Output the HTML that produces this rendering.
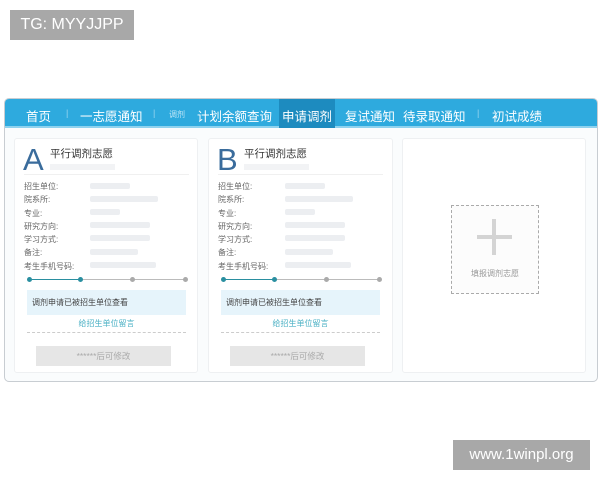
<!DOCTYPE html>
<html><head><meta charset="utf-8"><style>
*{margin:0;padding:0;box-sizing:border-box}
body{width:600px;height:480px;background:#fff;position:relative;overflow:hidden;font-family:"Liberation Sans","Noto Sans CJK SC",sans-serif}
.abs{position:absolute}
.tag{background:#a8a8a8;color:#fff;font-size:16px;line-height:30px;text-align:center}
.outer{left:4px;top:98px;width:594px;height:284px;border:1px solid #c8cdd2;border-radius:5px;background:#fafcfd;overflow:hidden}
.nav{left:0;top:0;width:594px;height:29px;background:#2eaade;border-bottom:2px solid #8fd2ee}
.nav span{position:absolute;top:7px;color:#fff;font-size:12.5px;white-space:nowrap}
.nav .sep{color:#9bd6ef;font-size:9px;top:9px}
.act{position:absolute;left:274px;top:0;width:56px;height:29px;background:#1d8bbf}
.card{background:#fff;border:1px solid #eef0f2;border-radius:3px}
.big{font-size:31px;color:#3a6c9c;font-family:"Liberation Sans",sans-serif;line-height:30px;font-weight:300}
.t{font-size:10.5px;color:#333}
.lab{font-size:8px;color:#666;line-height:13.3px}
.bar{background:#eceef1;height:6px;border-radius:2px}
.dot{width:5px;height:5px;border-radius:50%}
</style></head><body>
<div class="abs tag" style="left:10px;top:10px;width:124px;height:30px">TG: MYYJJPP</div>
<div class="abs tag" style="left:453px;top:440px;width:137px;height:30px;font-size:15px">www.1winpl.org</div>

<div class="abs outer">
 <div class="abs nav">
  <div class="act"></div>
  <span style="left:21px">首页</span>
  <span class="sep" style="left:61px">|</span>
  <span style="left:75px">一志愿通知</span>
  <span class="sep" style="left:148px">|</span>
  <span style="left:164px;font-size:8px;top:10px;color:#bfe6f7">调剂</span>
  <span style="left:192px">计划余额查询</span>
  <span style="left:277px">申请调剂</span>
  <span style="left:340px">复试通知</span>
  <span style="left:398px">待录取通知</span>
  <span class="sep" style="left:472px">|</span>
  <span style="left:487px">初试成绩</span>
 </div>
</div>

<div class="abs card" style="left:14px;top:138px;width:184px;height:235px"></div>
<div class="abs card" style="left:208px;top:138px;width:185px;height:235px"></div>
<div class="abs card" style="left:402px;top:138px;width:184px;height:235px"></div>

<div class="abs big" style="left:23px;top:145px">A</div>
<div class="abs big" style="left:217px;top:145px">B</div>
<div class="abs t" style="left:50px;top:146px">平行调剂志愿</div>
<div class="abs t" style="left:244px;top:146px">平行调剂志愿</div>

<div class="abs" style="left:50px;top:164px;width:65px;height:6px;background:#f2f3f5"></div>
<div class="abs" style="left:24px;top:174px;width:165px;height:1px;background:#f0f0f0"></div>
<div class="abs" style="left:244px;top:164px;width:65px;height:6px;background:#f2f3f5"></div>
<div class="abs" style="left:218px;top:174px;width:165px;height:1px;background:#f0f0f0"></div>

<div class="abs lab" style="left:24px;top:180px">招生单位:<br>院系所:<br>专业:<br>研究方向:<br>学习方式:<br>备注:<br>考生手机号码:</div>
<div class="abs lab" style="left:218px;top:180px">招生单位:<br>院系所:<br>专业:<br>研究方向:<br>学习方式:<br>备注:<br>考生手机号码:</div>

<div class="abs bar" style="left:90px;top:183px;width:40px"></div>
<div class="abs bar" style="left:90px;top:196px;width:68px"></div>
<div class="abs bar" style="left:90px;top:209px;width:30px"></div>
<div class="abs bar" style="left:90px;top:222px;width:60px"></div>
<div class="abs bar" style="left:90px;top:235px;width:60px"></div>
<div class="abs bar" style="left:90px;top:249px;width:48px"></div>
<div class="abs bar" style="left:90px;top:262px;width:66px"></div>
<div class="abs bar" style="left:285px;top:183px;width:40px"></div>
<div class="abs bar" style="left:285px;top:196px;width:68px"></div>
<div class="abs bar" style="left:285px;top:209px;width:30px"></div>
<div class="abs bar" style="left:285px;top:222px;width:60px"></div>
<div class="abs bar" style="left:285px;top:235px;width:60px"></div>
<div class="abs bar" style="left:285px;top:249px;width:48px"></div>
<div class="abs bar" style="left:285px;top:262px;width:66px"></div>

<div class="abs" style="left:29px;top:279px;width:156px;height:1px;background:#bbb"></div>
<div class="abs" style="left:29px;top:279px;width:52px;height:1px;background:#2a8fa0"></div>
<div class="abs dot" style="left:27px;top:277px;background:#2a8fa0"></div>
<div class="abs dot" style="left:78px;top:277px;background:#2a8fa0"></div>
<div class="abs dot" style="left:130px;top:277px;background:#aaa"></div>
<div class="abs dot" style="left:183px;top:277px;background:#aaa"></div>
<div class="abs" style="left:223px;top:279px;width:156px;height:1px;background:#bbb"></div>
<div class="abs" style="left:223px;top:279px;width:52px;height:1px;background:#2a8fa0"></div>
<div class="abs dot" style="left:221px;top:277px;background:#2a8fa0"></div>
<div class="abs dot" style="left:272px;top:277px;background:#2a8fa0"></div>
<div class="abs dot" style="left:324px;top:277px;background:#aaa"></div>
<div class="abs dot" style="left:377px;top:277px;background:#aaa"></div>

<div class="abs" style="left:27px;top:290px;width:159px;height:25px;background:#e6f4fb;font-size:8px;color:#444;line-height:25px;padding-left:5px">调剂申请已被招生单位查看</div>
<div class="abs" style="left:221px;top:290px;width:159px;height:25px;background:#e6f4fb;font-size:8px;color:#444;line-height:25px;padding-left:5px">调剂申请已被招生单位查看</div>
<div class="abs" style="left:27px;top:318px;width:159px;text-align:center;font-size:8px;color:#4ab0c4">给招生单位留言</div>
<div class="abs" style="left:221px;top:318px;width:159px;text-align:center;font-size:8px;color:#4ab0c4">给招生单位留言</div>
<div class="abs" style="left:27px;top:332px;width:159px;border-top:1px dashed #ccc"></div>
<div class="abs" style="left:221px;top:332px;width:159px;border-top:1px dashed #ccc"></div>
<div class="abs" style="left:36px;top:346px;width:135px;height:20px;background:#e6e6e6;text-align:center;line-height:20px;font-size:8.5px;color:#aaa">******后可修改</div>
<div class="abs" style="left:230px;top:346px;width:135px;height:20px;background:#e6e6e6;text-align:center;line-height:20px;font-size:8.5px;color:#aaa">******后可修改</div>

<div class="abs" style="left:451px;top:205px;width:88px;height:89px;border:1px dashed #aaa;background:#fcfcfc"></div>
<div class="abs" style="left:492px;top:219px;width:4px;height:36px;background:#d4d4d4"></div>
<div class="abs" style="left:477px;top:235px;width:35px;height:4px;background:#d4d4d4"></div>
<div class="abs" style="left:451px;top:268px;width:88px;text-align:center;font-size:8px;color:#999">填报调剂志愿</div>
</body></html>
